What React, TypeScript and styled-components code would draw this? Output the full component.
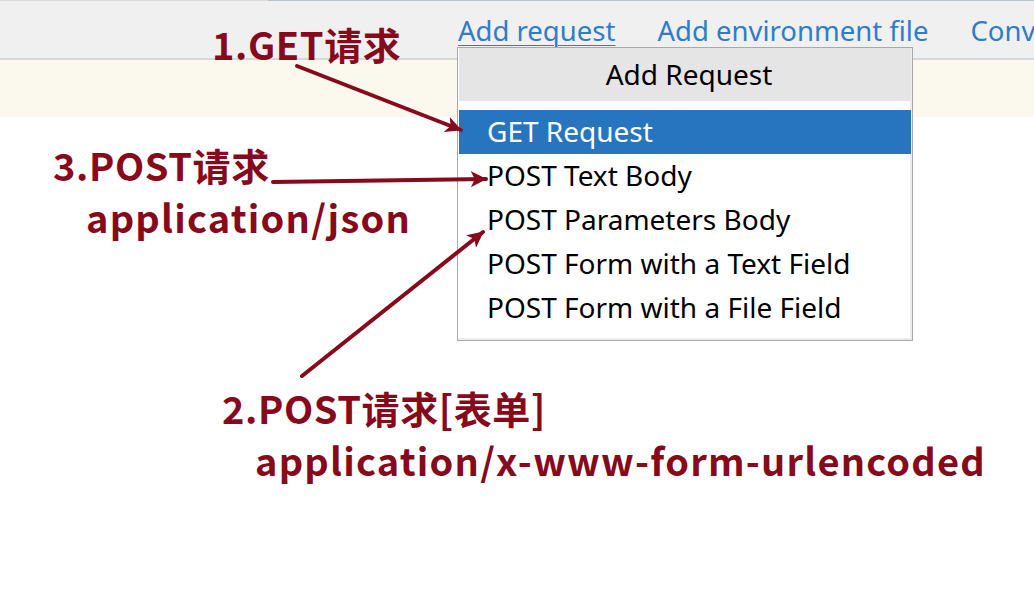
import React from "react";
import styled, { createGlobalStyle } from "styled-components";

const GlobalStyle = createGlobalStyle`
  html, body { margin: 0; padding: 0; background: #ffffff; }
  body { width: 1034px; height: 602px; overflow: hidden; font-family: "Noto Sans", "Open Sans", sans-serif; }
`;

const Page = styled.div`
  position: relative;
  width: 1034px;
  height: 602px;
  background: #ffffff;
  overflow: hidden;
`;

const TopLine = styled.div`
  display: grid;
  grid-template-columns: 268px 1fr;
  height: 1px;
`;

const TopSeg = styled.div<{ $tone: string }>`
  background: ${(p) => p.$tone};
`;

const Toolbar = styled.nav`
  display: flex;
  align-items: center;
  gap: 42px;
  height: 57px;
  padding-left: 458px;
  background: #f0f0f0;
  border-bottom: 2px solid #d8d8d8;
  white-space: nowrap;
  overflow: hidden;
`;

const ToolLink = styled.a<{ $underline?: boolean }>`
  font-family: "Noto Sans", sans-serif;
  font-size: 27.5px;
  color: #2f7cc9;
  text-decoration: ${(p) => (p.$underline ? "underline" : "none")};
  text-underline-offset: 4px;
  text-decoration-thickness: 1px;
  cursor: pointer;
  padding-top: 2px;
`;

const Banner = styled.div`
  height: 57px;
  background: #fbf9ed;
`;

const Menu = styled.div`
  position: absolute;
  left: 457px;
  top: 47px;
  width: 454px;
  padding-bottom: 10px;
  background: #ffffff;
  border: 1px solid #a9a9a9;
  box-shadow: inset -2px -2px 0 #ececec;
`;

const MenuHeader = styled.div`
  height: 53px;
  display: flex;
  align-items: center;
  justify-content: center;
  padding-left: 8px;
  padding-bottom: 2px;
  box-sizing: border-box;
  background: #e5e5e5;
  margin: 0 1px 9px 1px;
  font-size: 28px;
  color: #000000;
`;

const MenuItem = styled.div<{ $active?: boolean }>`
  height: 44px;
  display: flex;
  align-items: center;
  padding-left: 28px;
  padding-bottom: 2px;
  box-sizing: border-box;
  margin: 0 1px;
  font-size: 28px;
  color: ${(p) => (p.$active ? "#ffffff" : "#000000")};
  background: ${(p) => (p.$active ? "#2775bf" : "transparent")};
`;

const NoteBlock = styled.div<{ $x: number; $y: number }>`
  position: absolute;
  left: ${(p) => p.$x}px;
  top: ${(p) => p.$y}px;
  display: flex;
  flex-direction: column;
  gap: 14px;
`;

const NoteLine = styled.div<{ $indent?: number; $latin?: boolean }>`
  padding-left: ${(p) => p.$indent ?? 0}px;
  font-family: "Noto Sans CJK SC", "Noto Sans", sans-serif;
  font-weight: 700;
  font-size: 38px;
  line-height: 1;
  letter-spacing: ${(p) => (p.$latin ? "1.2px" : "0.6px")};
  color: #870a1c;
  white-space: nowrap;
`;

const Arrows = styled.svg`
  position: absolute;
  left: 0;
  top: 0;
  pointer-events: none;
`;

const items = [
  "GET Request",
  "POST Text Body",
  "POST Parameters Body",
  "POST Form with a Text Field",
  "POST Form with a File Field",
];

export default function App() {
  return (
    <Page>
      <GlobalStyle />
      <TopLine>
        <TopSeg $tone="#dadada" />
        <TopSeg $tone="#b6c1cd" />
      </TopLine>
      <Toolbar>
        <ToolLink $underline>Add request</ToolLink>
        <ToolLink>Add environment file</ToolLink>
        <ToolLink>Convert</ToolLink>
      </Toolbar>
      <Banner />

      <Menu>
        <MenuHeader>Add Request</MenuHeader>
        {items.map((t, i) => (
          <MenuItem key={t} $active={i === 0}>
            {t}
          </MenuItem>
        ))}
      </Menu>

      <NoteBlock $x={212} $y={25}>
        <NoteLine>1.GET请求</NoteLine>
      </NoteBlock>
      <NoteBlock $x={53} $y={146}>
        <NoteLine>3.POST请求</NoteLine>
        <NoteLine $indent={33} $latin>application/json</NoteLine>
      </NoteBlock>
      <NoteBlock $x={222} $y={389}>
        <NoteLine>2.POST请求[表单]</NoteLine>
        <NoteLine $indent={33} $latin>application/x-www-form-urlencoded</NoteLine>
      </NoteBlock>

      <Arrows width="1034" height="602" viewBox="0 0 1034 602">
        <defs>
          <marker id="head" viewBox="0 0 10 10" refX="9.5" refY="5" markerWidth="4" markerHeight="4" orient="auto">
            <path d="M0 0 L10 5 L0 10 L2.5 5 Z" fill="#870a1c" />
          </marker>
        </defs>
        <g stroke="#870a1c" strokeWidth="4" strokeLinecap="round" fill="none">
          <line x1="297" y1="66" x2="461" y2="130" markerEnd="url(#head)" />
          <line x1="273" y1="182" x2="486" y2="179" markerEnd="url(#head)" />
          <line x1="302" y1="376" x2="483" y2="232" markerEnd="url(#head)" />
        </g>
      </Arrows>
    </Page>
  );
}
